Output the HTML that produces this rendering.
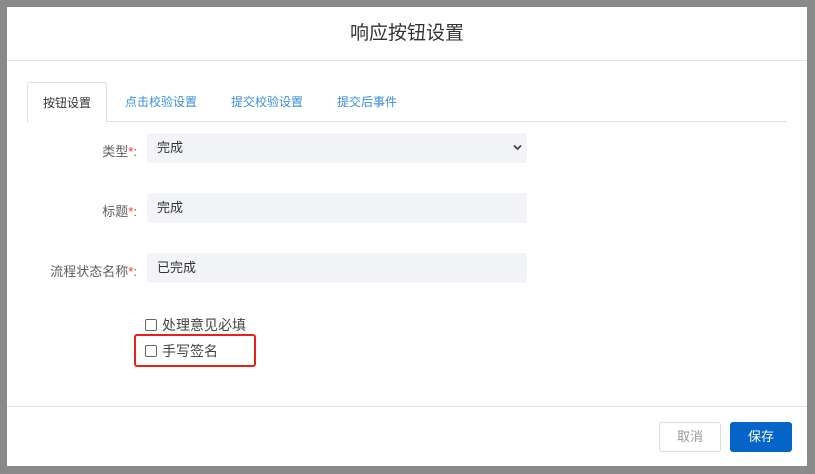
<!DOCTYPE html>
<html><head><meta charset="utf-8"><style>
*{box-sizing:border-box;margin:0;padding:0}
body{width:815px;height:474px;background:#8a8a8a;font-family:"Liberation Sans","Noto Sans CJK SC",sans-serif;position:relative;overflow:hidden;font-size:13px;color:#555}
.dlg{position:absolute;left:7px;top:7px;width:800px;height:459px;background:#fff}
.hd{position:absolute;left:0;top:0;width:800px;height:54px;border-bottom:1px solid #e3e5ea;text-align:center;line-height:54px;font-size:19px;color:#333}
.tabs{position:absolute;left:20px;top:75px;width:760px;height:40px;border-bottom:1px solid #dcdfe6}
.tab{position:absolute;top:0;height:40px;line-height:40px;font-size:12px;color:#3b8ed8}
.tab.a{left:0;width:80px;border:1px solid #dcdfe6;border-bottom:1px solid #fff;border-radius:3px 3px 0 0;color:#333;text-align:center;height:41px;background:#fff}
.lbl{position:absolute;right:670px;font-size:13px;color:#606060;text-align:right;white-space:nowrap}
.lbl i{color:#f33;font-style:normal}
.in{position:absolute;left:140px;width:380px;height:30px;background:#f3f4f8;border-radius:2px;line-height:30px;padding-left:10px;color:#333;font-size:13px}
.cb{position:absolute;left:138px;font-size:14px;color:#444;white-space:nowrap}
.cb span{display:inline-block;width:12px;height:12px;border:1px solid #666;border-radius:2px;vertical-align:-1px;margin-right:5px}
.red{position:absolute;left:127px;top:327px;width:122px;height:33px;border:2px solid #e8201b;border-radius:3px}
.ft{position:absolute;left:0;top:399px;width:800px;border-top:1px solid #e3e5ea}
.btn{position:absolute;top:415px;width:62px;height:30px;border-radius:3px;text-align:center;line-height:28px;font-size:13px}
</style></head><body>
<div class="dlg">
<div class="hd">响应按钮设置</div>
<div class="tabs">
<div class="tab a">按钮设置</div>
<div class="tab" style="left:98px">点击校验设置</div>
<div class="tab" style="left:204px">提交校验设置</div>
<div class="tab" style="left:310px">提交后事件</div>
</div>
<div class="lbl" style="top:134px">类型<i>*</i>:</div>
<div class="in" style="top:126px">完成<svg style="position:absolute;right:5px;top:11px" width="9" height="7" viewBox="0 0 9 7"><path d="M1 1.5L4.5 5 8 1.5" stroke="#444" stroke-width="1.8" fill="none"/></svg></div>
<div class="lbl" style="top:194px">标题<i>*</i>:</div>
<div class="in" style="top:186px">完成</div>
<div class="lbl" style="top:254px">流程状态名称<i>*</i>:</div>
<div class="in" style="top:246px">已完成</div>
<div class="cb" style="top:308px"><span></span>处理意见必填</div>
<div class="cb" style="top:334px"><span></span>手写签名</div>
<div class="red"></div>
<div class="ft"></div>
<div class="btn" style="left:652px;border:1px solid #d8dce5;color:#999">取消</div>
<div class="btn" style="left:723px;background:#0564c8;color:#fff;line-height:30px">保存</div>
</div>
</body></html>
